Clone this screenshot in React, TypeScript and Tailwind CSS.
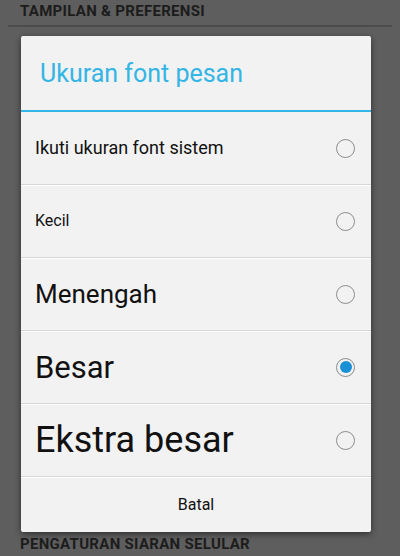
const options = [
  { label: "Ikuti ukuran font sistem", size: "text-[18px]", checked: false },
  { label: "Kecil", size: "text-[16px]", checked: false },
  { label: "Menengah", size: "text-[26px]", checked: false },
  { label: "Besar", size: "text-[31px]", checked: true },
  { label: "Ekstra besar", size: "text-[36px]", checked: false },
];

function Radio({ checked }: { checked: boolean }) {
  return (
    <div className="w-[19px] h-[19px] rounded-full border-[1.5px] border-[#8c8c8c] flex items-center justify-center">
      {checked && <div className="w-[12px] h-[12px] rounded-full bg-[#1b8fd6]" />}
    </div>
  );
}

export default function App() {
  return (
    <div
      className="w-[400px] h-[556px] overflow-hidden bg-[#5e5e5e] flex flex-col"
      style={{ fontFamily: "Roboto, 'Noto Sans', sans-serif" }}
    >
      <div className="px-5 pt-[3px] h-[25px] text-[15px] tracking-[0.3px] font-bold text-[#1c1c1c] leading-[17px]">
        TAMPILAN &amp; PREFERENSI
      </div>
      <div className="mx-2 h-[2px] bg-[#4b4b4b]" />

      <div className="mt-[9px] ml-[21px] w-[350px] bg-[#f2f2f2] rounded-[2px] shadow-[0_2px_6px_rgba(0,0,0,0.5)] flex flex-col">
        <div className="h-[74px] flex items-center pl-[19px] pt-[2px] text-[25px] text-[#33b5e5]">
          Ukuran font pesan
        </div>
        <div className="h-[2px] bg-[#33b5e5]" />

        {options.map((o) => (
          <div
            key={o.label}
            className="h-[73px] flex items-center justify-between pl-[14px] pr-[16px] border-b border-[#d8d8d8] shadow-[0_1px_0_#ffffff]"
          >
            <span className={`${o.size} text-[#111111] leading-none`}>{o.label}</span>
            <Radio checked={o.checked} />
          </div>
        ))}

        <div className="h-[55px] flex items-center justify-center text-[16px] text-[#111111]">
          Batal
        </div>
      </div>

      <div className="px-5 pt-[4px] text-[15px] tracking-[0.3px] font-bold text-[#1c1c1c] leading-[17px]">
        PENGATURAN SIARAN SELULAR
      </div>
    </div>
  );
}
